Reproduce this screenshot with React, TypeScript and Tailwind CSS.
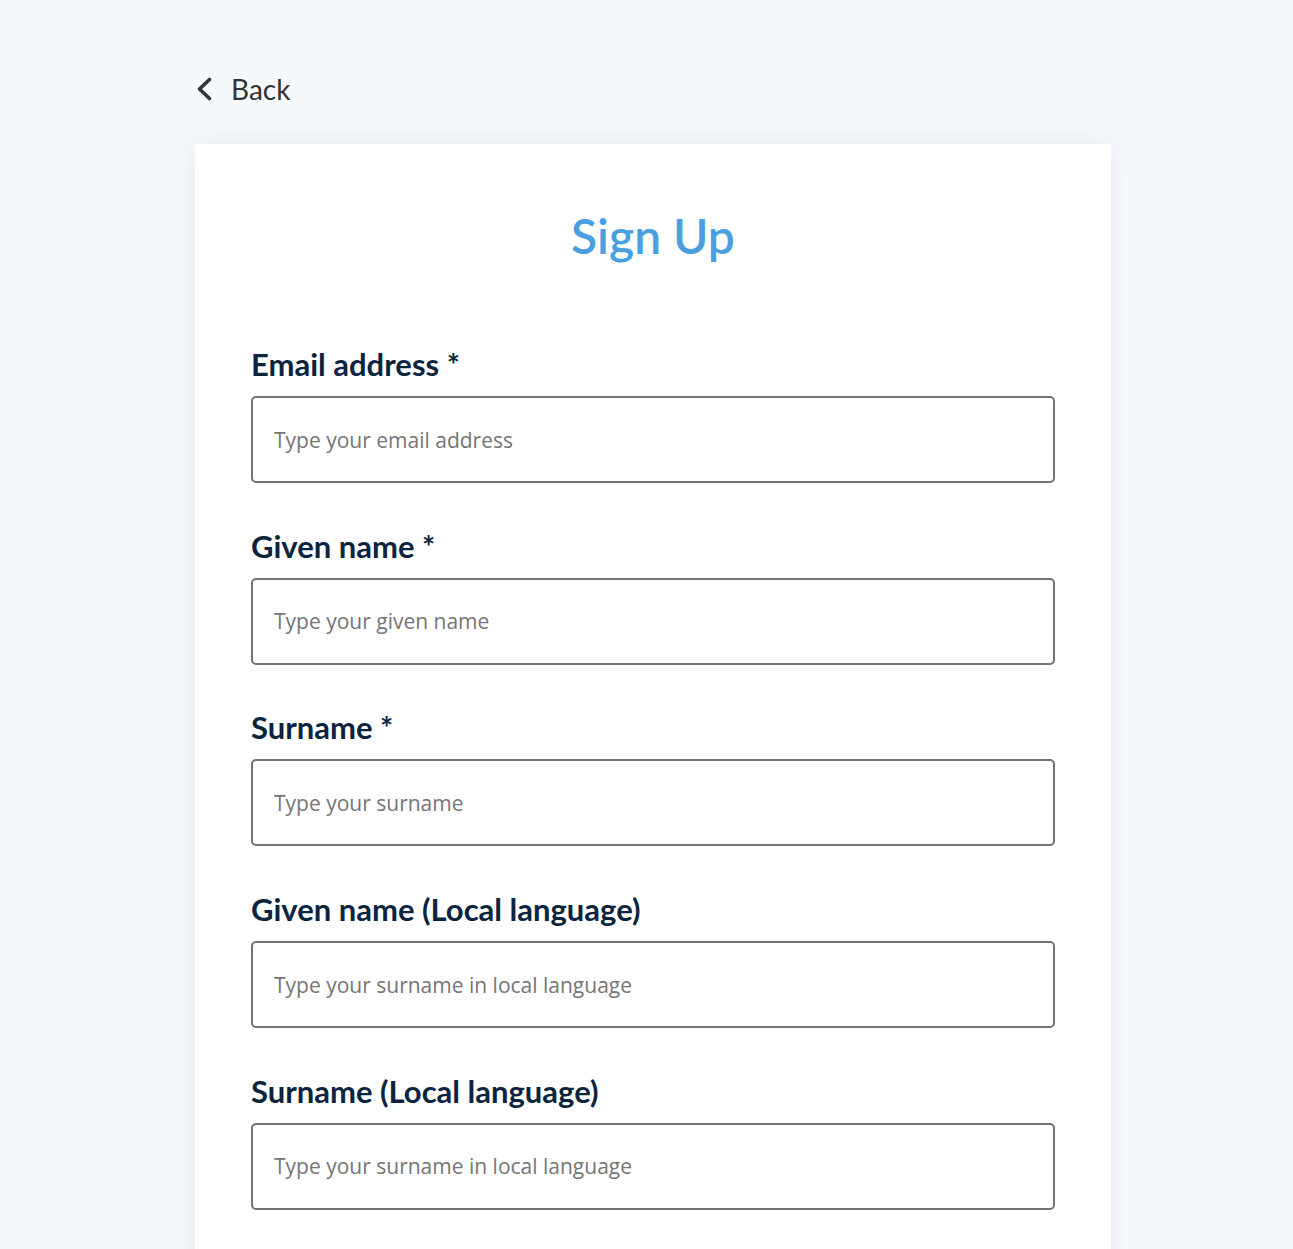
import React from "react";

const fields = [
  { label: "Email address", required: true, placeholder: "Type your email address" },
  { label: "Given name", required: true, placeholder: "Type your given name" },
  { label: "Surname", required: true, placeholder: "Type your surname" },
  { label: "Given name (Local language)", required: false, placeholder: "Type your surname in local language" },
  { label: "Surname (Local language)", required: false, placeholder: "Type your surname in local language" },
];

export default function App() {
  return (
    <div className="min-h-screen bg-[#f6f9fc] pl-[13px]" style={{ fontFamily: "Lato, 'Open Sans', sans-serif" }}>
      <div className="mx-auto w-[916px] pt-[72px]">
        <button className="flex items-center h-[34px] text-[#333333] text-[28px] leading-[34px] font-[Lato,sans-serif]">
          <svg width="18" height="26" viewBox="0 0 18 26" className="mr-[18px]">
            <path d="M14.5 3.5 L4.5 13 L14.5 22.5" fill="none" stroke="#333333" strokeWidth="3.6" strokeLinecap="round" strokeLinejoin="round" />
          </svg>
          <span>Back</span>
        </button>
        <div className="mt-[38px] bg-white shadow-[0_0_30px_rgba(30,60,100,0.07)] px-[56px] pt-[63px] pb-[120px]">
          <h1 className="text-center text-[48px] leading-[58px] font-semibold text-[#4a9fe0] font-[Lato,sans-serif]">Sign Up</h1>
          <div className="mt-[81px] flex flex-col gap-[44.7px]">
            {fields.map((f) => (
              <div key={f.label} className="flex flex-col">
                <label className="text-[31px] leading-[36px] font-bold text-[#0b2540] font-[Lato,sans-serif]">
                  {f.label}
                  {f.required && " *"}
                </label>
                <input
                  type="text"
                  placeholder={f.placeholder}
                  className="mt-[14px] h-[87px] w-full rounded-[5px] border-2 border-[#737373] bg-white px-[21px] text-[21px] text-[#333] placeholder:text-[#757575] outline-none font-['Open_Sans',sans-serif]"
                />
              </div>
            ))}
          </div>
        </div>
      </div>
    </div>
  );
}
